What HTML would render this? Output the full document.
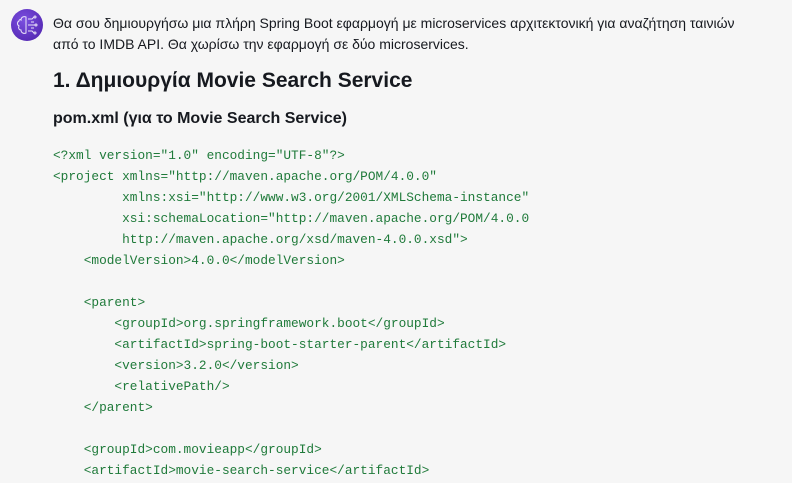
<!DOCTYPE html>
<html><head><meta charset="utf-8"><style>
body{margin:0;width:792px;height:483px;overflow:hidden;background:#f6f6f6;font-family:"Liberation Sans",sans-serif;color:#16191f;}
.icon{position:absolute;left:11px;top:9px;width:32px;height:32px;border-radius:50%;background:radial-gradient(circle at 40% 35%,#7b4fe0,#4b1fa8);}
.p{position:absolute;left:53px;top:13px;font-size:14px;line-height:21px;width:716px;}
h1{position:absolute;left:53px;top:69px;margin:0;font-size:21px;font-weight:bold;}
h2{position:absolute;left:53px;top:110px;margin:0;font-size:16px;font-weight:bold;}
pre{position:absolute;left:53px;top:145px;margin:0;font-family:"Liberation Mono",monospace;font-size:12.8px;line-height:21px;color:#1f7a3a;}
</style></head><body>
<div class="icon"><svg width="32" height="32" viewBox="0 0 32 32" fill="none" stroke="#fff" stroke-width="1" opacity=".85"><path d="M10 11c0-3 3-4 5-3v16c-2 1-5 0-5-3-2 0-3-2-2-4-2-1-2-4 0-5 0-1 1-2 2-1z"/><path d="M17 10h4l2-2M17 16h7M17 22h4l2 2M20 13h3M20 19h3"/><circle cx="24" cy="8" r="1"/><circle cx="25" cy="16" r="1"/><circle cx="24" cy="24" r="1"/></svg></div>
<div class="p">Θα σου δημιουργήσω μια πλήρη Spring Boot εφαρμογή με microservices αρχιτεκτονική για αναζήτηση ταινιών<br>από το IMDB API. Θα χωρίσω την εφαρμογή σε δύο microservices.</div>
<h1>1. Δημιουργία Movie Search Service</h1>
<h2>pom.xml (για το Movie Search Service)</h2>
<pre>&lt;?xml version="1.0" encoding="UTF-8"?&gt;
&lt;project xmlns="http://maven.apache.org/POM/4.0.0"
         xmlns:xsi="http://www.w3.org/2001/XMLSchema-instance"
         xsi:schemaLocation="http://maven.apache.org/POM/4.0.0
         http://maven.apache.org/xsd/maven-4.0.0.xsd"&gt;
    &lt;modelVersion&gt;4.0.0&lt;/modelVersion&gt;

    &lt;parent&gt;
        &lt;groupId&gt;org.springframework.boot&lt;/groupId&gt;
        &lt;artifactId&gt;spring-boot-starter-parent&lt;/artifactId&gt;
        &lt;version&gt;3.2.0&lt;/version&gt;
        &lt;relativePath/&gt;
    &lt;/parent&gt;

    &lt;groupId&gt;com.movieapp&lt;/groupId&gt;
    &lt;artifactId&gt;movie-search-service&lt;/artifactId&gt;</pre>
</body></html>
